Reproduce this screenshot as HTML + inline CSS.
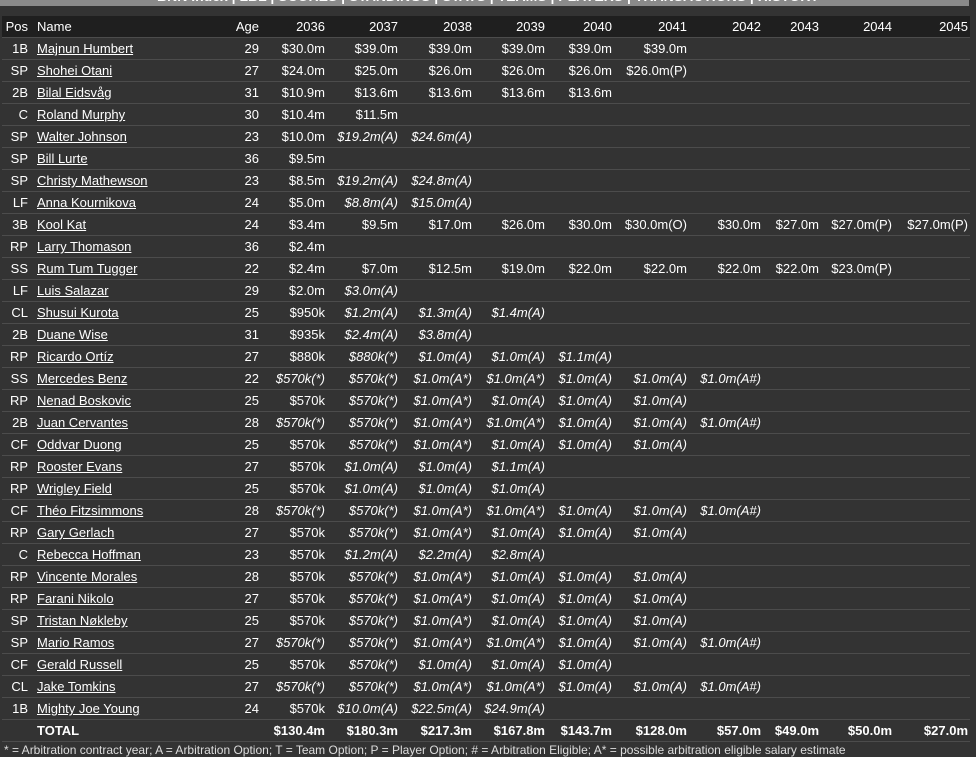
<!DOCTYPE html>
<html><head><meta charset="utf-8"><style>
html,body{margin:0;padding:0;background:#333;width:976px;height:748px;overflow:hidden;font-family:"Liberation Sans",sans-serif;color:#fff;font-size:13px}
.bar{position:absolute;left:0;top:0;width:969px;height:6px;background:#8a8a8a;overflow:hidden}
.bar span{position:absolute;left:157px;top:-12px;font-weight:bold;font-size:14px;color:#fff;white-space:nowrap}
table{position:absolute;left:2px;top:16px;border-collapse:collapse;table-layout:fixed;width:968px}
td,th{height:21px;padding:0 2px 0 0;text-align:right;white-space:nowrap;border-bottom:1px solid #4c4c4c;font-weight:normal;overflow:visible}
th{background:#1f1f1f;border-bottom:1px solid #4c4c4c}
td.n,th.n{text-align:left;padding-left:7px}
td.n a{color:#fff;text-decoration:underline}
i{font-style:italic}
tr.t td{font-weight:bold}
.foot{position:absolute;left:4px;top:743px;font-size:12px;color:#ddd;white-space:nowrap}
</style></head><body>
<div class="bar"><span>BNN Index | LBL | SCORES | STANDINGS | STATS | TEAMS | PLAYERS | TRANSACTIONS | HISTORY</span></div>
<table>
<colgroup><col style="width:28px"><col style="width:195px"><col style="width:36px"><col style="width:66px"><col style="width:73px"><col style="width:74px"><col style="width:73px"><col style="width:67px"><col style="width:75px"><col style="width:74px"><col style="width:58px"><col style="width:73px"><col style="width:76px"></colgroup>
<tr><th>Pos</th><th class="n">Name</th><th>Age</th><th>2036</th><th>2037</th><th>2038</th><th>2039</th><th>2040</th><th>2041</th><th>2042</th><th>2043</th><th>2044</th><th>2045</th></tr>
<tr><td>1B</td><td class="n"><a>Majnun Humbert</a></td><td>29</td><td>$30.0m</td><td>$39.0m</td><td>$39.0m</td><td>$39.0m</td><td>$39.0m</td><td>$39.0m</td><td></td><td></td><td></td><td></td></tr>
<tr><td>SP</td><td class="n"><a>Shohei Otani</a></td><td>27</td><td>$24.0m</td><td>$25.0m</td><td>$26.0m</td><td>$26.0m</td><td>$26.0m</td><td>$26.0m(P)</td><td></td><td></td><td></td><td></td></tr>
<tr><td>2B</td><td class="n"><a>Bilal Eidsvåg</a></td><td>31</td><td>$10.9m</td><td>$13.6m</td><td>$13.6m</td><td>$13.6m</td><td>$13.6m</td><td></td><td></td><td></td><td></td><td></td></tr>
<tr><td>C</td><td class="n"><a>Roland Murphy</a></td><td>30</td><td>$10.4m</td><td>$11.5m</td><td></td><td></td><td></td><td></td><td></td><td></td><td></td><td></td></tr>
<tr><td>SP</td><td class="n"><a>Walter Johnson</a></td><td>23</td><td>$10.0m</td><td><i>$19.2m(A)</i></td><td><i>$24.6m(A)</i></td><td></td><td></td><td></td><td></td><td></td><td></td><td></td></tr>
<tr><td>SP</td><td class="n"><a>Bill Lurte</a></td><td>36</td><td>$9.5m</td><td></td><td></td><td></td><td></td><td></td><td></td><td></td><td></td><td></td></tr>
<tr><td>SP</td><td class="n"><a>Christy Mathewson</a></td><td>23</td><td>$8.5m</td><td><i>$19.2m(A)</i></td><td><i>$24.8m(A)</i></td><td></td><td></td><td></td><td></td><td></td><td></td><td></td></tr>
<tr><td>LF</td><td class="n"><a>Anna Kournikova</a></td><td>24</td><td>$5.0m</td><td><i>$8.8m(A)</i></td><td><i>$15.0m(A)</i></td><td></td><td></td><td></td><td></td><td></td><td></td><td></td></tr>
<tr><td>3B</td><td class="n"><a>Kool Kat</a></td><td>24</td><td>$3.4m</td><td>$9.5m</td><td>$17.0m</td><td>$26.0m</td><td>$30.0m</td><td>$30.0m(O)</td><td>$30.0m</td><td>$27.0m</td><td>$27.0m(P)</td><td>$27.0m(P)</td></tr>
<tr><td>RP</td><td class="n"><a>Larry Thomason</a></td><td>36</td><td>$2.4m</td><td></td><td></td><td></td><td></td><td></td><td></td><td></td><td></td><td></td></tr>
<tr><td>SS</td><td class="n"><a>Rum Tum Tugger</a></td><td>22</td><td>$2.4m</td><td>$7.0m</td><td>$12.5m</td><td>$19.0m</td><td>$22.0m</td><td>$22.0m</td><td>$22.0m</td><td>$22.0m</td><td>$23.0m(P)</td><td></td></tr>
<tr><td>LF</td><td class="n"><a>Luis Salazar</a></td><td>29</td><td>$2.0m</td><td><i>$3.0m(A)</i></td><td></td><td></td><td></td><td></td><td></td><td></td><td></td><td></td></tr>
<tr><td>CL</td><td class="n"><a>Shusui Kurota</a></td><td>25</td><td>$950k</td><td><i>$1.2m(A)</i></td><td><i>$1.3m(A)</i></td><td><i>$1.4m(A)</i></td><td></td><td></td><td></td><td></td><td></td><td></td></tr>
<tr><td>2B</td><td class="n"><a>Duane Wise</a></td><td>31</td><td>$935k</td><td><i>$2.4m(A)</i></td><td><i>$3.8m(A)</i></td><td></td><td></td><td></td><td></td><td></td><td></td><td></td></tr>
<tr><td>RP</td><td class="n"><a>Ricardo Ortíz</a></td><td>27</td><td>$880k</td><td><i>$880k(*)</i></td><td><i>$1.0m(A)</i></td><td><i>$1.0m(A)</i></td><td><i>$1.1m(A)</i></td><td></td><td></td><td></td><td></td><td></td></tr>
<tr><td>SS</td><td class="n"><a>Mercedes Benz</a></td><td>22</td><td><i>$570k(*)</i></td><td><i>$570k(*)</i></td><td><i>$1.0m(A*)</i></td><td><i>$1.0m(A*)</i></td><td><i>$1.0m(A)</i></td><td><i>$1.0m(A)</i></td><td><i>$1.0m(A#)</i></td><td></td><td></td><td></td></tr>
<tr><td>RP</td><td class="n"><a>Nenad Boskovic</a></td><td>25</td><td>$570k</td><td><i>$570k(*)</i></td><td><i>$1.0m(A*)</i></td><td><i>$1.0m(A)</i></td><td><i>$1.0m(A)</i></td><td><i>$1.0m(A)</i></td><td></td><td></td><td></td><td></td></tr>
<tr><td>2B</td><td class="n"><a>Juan Cervantes</a></td><td>28</td><td><i>$570k(*)</i></td><td><i>$570k(*)</i></td><td><i>$1.0m(A*)</i></td><td><i>$1.0m(A*)</i></td><td><i>$1.0m(A)</i></td><td><i>$1.0m(A)</i></td><td><i>$1.0m(A#)</i></td><td></td><td></td><td></td></tr>
<tr><td>CF</td><td class="n"><a>Oddvar Duong</a></td><td>25</td><td>$570k</td><td><i>$570k(*)</i></td><td><i>$1.0m(A*)</i></td><td><i>$1.0m(A)</i></td><td><i>$1.0m(A)</i></td><td><i>$1.0m(A)</i></td><td></td><td></td><td></td><td></td></tr>
<tr><td>RP</td><td class="n"><a>Rooster Evans</a></td><td>27</td><td>$570k</td><td><i>$1.0m(A)</i></td><td><i>$1.0m(A)</i></td><td><i>$1.1m(A)</i></td><td></td><td></td><td></td><td></td><td></td><td></td></tr>
<tr><td>RP</td><td class="n"><a>Wrigley Field</a></td><td>25</td><td>$570k</td><td><i>$1.0m(A)</i></td><td><i>$1.0m(A)</i></td><td><i>$1.0m(A)</i></td><td></td><td></td><td></td><td></td><td></td><td></td></tr>
<tr><td>CF</td><td class="n"><a>Théo Fitzsimmons</a></td><td>28</td><td><i>$570k(*)</i></td><td><i>$570k(*)</i></td><td><i>$1.0m(A*)</i></td><td><i>$1.0m(A*)</i></td><td><i>$1.0m(A)</i></td><td><i>$1.0m(A)</i></td><td><i>$1.0m(A#)</i></td><td></td><td></td><td></td></tr>
<tr><td>RP</td><td class="n"><a>Gary Gerlach</a></td><td>27</td><td>$570k</td><td><i>$570k(*)</i></td><td><i>$1.0m(A*)</i></td><td><i>$1.0m(A)</i></td><td><i>$1.0m(A)</i></td><td><i>$1.0m(A)</i></td><td></td><td></td><td></td><td></td></tr>
<tr><td>C</td><td class="n"><a>Rebecca Hoffman</a></td><td>23</td><td>$570k</td><td><i>$1.2m(A)</i></td><td><i>$2.2m(A)</i></td><td><i>$2.8m(A)</i></td><td></td><td></td><td></td><td></td><td></td><td></td></tr>
<tr><td>RP</td><td class="n"><a>Vincente Morales</a></td><td>28</td><td>$570k</td><td><i>$570k(*)</i></td><td><i>$1.0m(A*)</i></td><td><i>$1.0m(A)</i></td><td><i>$1.0m(A)</i></td><td><i>$1.0m(A)</i></td><td></td><td></td><td></td><td></td></tr>
<tr><td>RP</td><td class="n"><a>Farani Nikolo</a></td><td>27</td><td>$570k</td><td><i>$570k(*)</i></td><td><i>$1.0m(A*)</i></td><td><i>$1.0m(A)</i></td><td><i>$1.0m(A)</i></td><td><i>$1.0m(A)</i></td><td></td><td></td><td></td><td></td></tr>
<tr><td>SP</td><td class="n"><a>Tristan Nøkleby</a></td><td>25</td><td>$570k</td><td><i>$570k(*)</i></td><td><i>$1.0m(A*)</i></td><td><i>$1.0m(A)</i></td><td><i>$1.0m(A)</i></td><td><i>$1.0m(A)</i></td><td></td><td></td><td></td><td></td></tr>
<tr><td>SP</td><td class="n"><a>Mario Ramos</a></td><td>27</td><td><i>$570k(*)</i></td><td><i>$570k(*)</i></td><td><i>$1.0m(A*)</i></td><td><i>$1.0m(A*)</i></td><td><i>$1.0m(A)</i></td><td><i>$1.0m(A)</i></td><td><i>$1.0m(A#)</i></td><td></td><td></td><td></td></tr>
<tr><td>CF</td><td class="n"><a>Gerald Russell</a></td><td>25</td><td>$570k</td><td><i>$570k(*)</i></td><td><i>$1.0m(A)</i></td><td><i>$1.0m(A)</i></td><td><i>$1.0m(A)</i></td><td></td><td></td><td></td><td></td><td></td></tr>
<tr><td>CL</td><td class="n"><a>Jake Tomkins</a></td><td>27</td><td><i>$570k(*)</i></td><td><i>$570k(*)</i></td><td><i>$1.0m(A*)</i></td><td><i>$1.0m(A*)</i></td><td><i>$1.0m(A)</i></td><td><i>$1.0m(A)</i></td><td><i>$1.0m(A#)</i></td><td></td><td></td><td></td></tr>
<tr><td>1B</td><td class="n"><a>Mighty Joe Young</a></td><td>24</td><td>$570k</td><td><i>$10.0m(A)</i></td><td><i>$22.5m(A)</i></td><td><i>$24.9m(A)</i></td><td></td><td></td><td></td><td></td><td></td><td></td></tr>
<tr class="t"><td></td><td class="n">TOTAL</td><td></td><td>$130.4m</td><td>$180.3m</td><td>$217.3m</td><td>$167.8m</td><td>$143.7m</td><td>$128.0m</td><td>$57.0m</td><td>$49.0m</td><td>$50.0m</td><td>$27.0m</td></tr>
</table>
<div class="foot">* = Arbitration contract year; A = Arbitration Option; T = Team Option; P = Player Option; # = Arbitration Eligible; A* = possible arbitration eligible salary estimate</div>
</body></html>
